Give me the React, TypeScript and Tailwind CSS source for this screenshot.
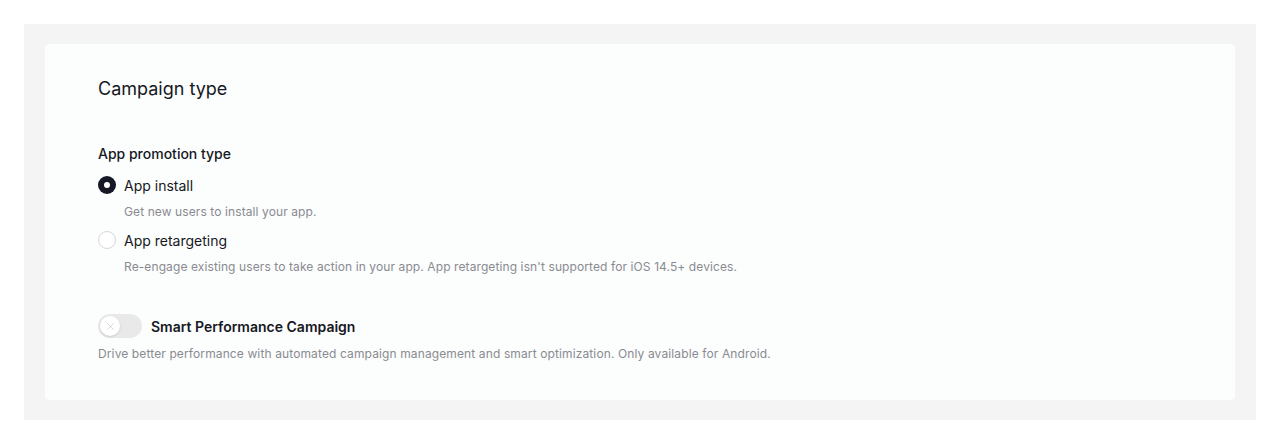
import { X } from "lucide-react"

const Radio = ({ checked }: { checked: boolean }) =>
  checked ? (
    <span className="flex h-[18px] w-[18px] shrink-0 items-center justify-center rounded-full bg-[#161823]">
      <span className="h-[6px] w-[6px] rounded-full bg-white" />
    </span>
  ) : (
    <span className="h-[18px] w-[18px] shrink-0 rounded-full border border-[#d6d6d8] bg-white" />
  )

const Option = ({ checked, label, desc }: { checked: boolean; label: string; desc: string }) => (
  <div>
    <div className="flex h-[28px] items-center gap-2">
      <Radio checked={checked} />
      <span className="text-[14px] text-[#161823]">{label}</span>
    </div>
    <p className="mt-[5px] pl-[26px] text-[12px] leading-[16px] tracking-[0.1px] text-[#8a8b91]">{desc}</p>
  </div>
)

export default function App() {
  return (
    <div className="min-h-[444px] bg-white p-6" style={{ fontFamily: "Inter, 'Liberation Sans', sans-serif" }}>
      <div className="bg-[#f4f4f4] px-[21px] py-[20px]">
        <div className="h-[356px] rounded-[4px] bg-[#fcfdfd] px-[53px] pt-[33px]">
          <h2 className="text-[18px] leading-[24px] text-[#161823]">Campaign type</h2>

          <h3 className="mt-[44px] text-[14px] font-medium leading-[18px] text-[#161823]">App promotion type</h3>
          <div className="mt-[8px] flex flex-col gap-[6px]">
            <Option checked label="App install" desc="Get new users to install your app." />
            <Option
              checked={false}
              label="App retargeting"
              desc="Re-engage existing users to take action in your app. App retargeting isn't supported for iOS 14.5+ devices."
            />
          </div>

          <div className="mt-[39px] flex items-center gap-[9px]">
            <span className="flex h-[24px] w-[44px] items-center rounded-full bg-[#e9e9ea] px-[2px]">
              <span className="flex h-[20px] w-[20px] items-center justify-center rounded-full bg-white shadow-sm">
                <X size={11} strokeWidth={1.5} className="text-[#c4c4c6]" />
              </span>
            </span>
            <span className="text-[14px] font-semibold text-[#161823]">Smart Performance Campaign</span>
          </div>
          <p className="mt-[8px] text-[12px] leading-[16px] tracking-[0.12px] text-[#8a8b91]">
            Drive better performance with automated campaign management and smart optimization. Only available for Android.
          </p>
        </div>
      </div>
    </div>
  )
}
